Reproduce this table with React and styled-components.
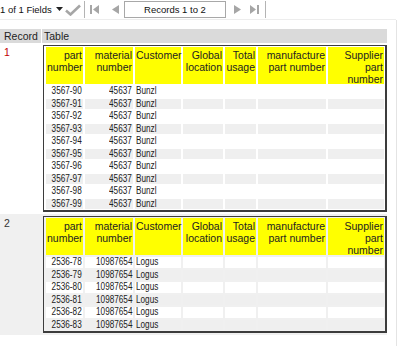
import React from "react";
import styled, { createGlobalStyle } from "styled-components";

const GlobalStyle = createGlobalStyle`
  html, body { margin: 0; padding: 0; background: #ffffff; }
  body { font-family: "Liberation Sans", Arial, sans-serif; color: #222; }
`;

const Page = styled.div`
  display: flex;
  width: 400px;
  height: 346px;
  overflow: hidden;
`;

const Main = styled.div`
  width: 396px;
  display: flex;
  flex-direction: column;
`;

const Strip = styled.div`
  flex: 1;
  border-left: 1px solid #e4e4e4;
  margin-top: 20px;
`;

const Toolbar = styled.div`
  height: 20px;
  box-sizing: border-box;
  display: flex;
  align-items: center;
  border-bottom: 1px solid #ededed;
  font-size: 9.5px;
  color: #111;
`;

const FieldLabel = styled.span`
  width: 56px;
  white-space: nowrap;
`;

const ToolIcon = styled.svg`
  display: block;
  flex: none;
  margin-left: ${(p) => p.$ml || 0}px;
`;

const Sep = styled.div`
  width: 1px;
  height: 17px;
  background: #b4b4b4;
  margin-left: ${(p) => p.$ml || 0}px;
`;

const RecordsBox = styled.div`
  margin-left: 5px;
  width: 102px;
  height: 17px;
  box-sizing: border-box;
  border: 1px solid #a8a8a8;
  display: flex;
  align-items: center;
  justify-content: center;
  font-size: 9.5px;
  color: #111;
`;

const HeaderBar = styled.div`
  margin-top: 9px;
  width: 387px;
  display: grid;
  grid-template-columns: 41px 1fr;
  column-gap: 1px;
`;

const HeaderBarCell = styled.div`
  background: #dadada;
  height: 14px;
  font-size: 10.5px;
  line-height: 14px;
  padding-left: ${(p) => p.$pl}px;
  color: #222;
`;

const RecordRow = styled.div`
  width: 387px;
  display: flex;
  padding: 2px 0;
  background: ${(p) => (p.$alt ? "#f0f0f0" : "#ffffff")};
`;

const RecordNum = styled.div`
  width: 43px;
  flex: none;
  box-sizing: border-box;
  padding: 1px 0 0 4px;
  font-size: 10.5px;
  line-height: 12px;
  color: ${(p) => (p.$current ? "#c00000" : "#333")};
`;

const Table = styled.div`
  display: grid;
  grid-template-columns: 37px 48px 46px 40px 31px 68px 56px;
  gap: 2px;
  padding: 1px 1px 1px 2px;
  border: solid #3c3c3c;
  border-width: 1px 2px 2px 1px;
`;

const HeadCell = styled.div`
  background: #ffff00;
  height: 37px;
  box-sizing: border-box;
  padding: 2px 1px 0;
  font-size: 10.5px;
  line-height: 12px;
  text-align: ${(p) => p.$align};
  color: #222;
`;

const DataCell = styled.div`
  height: 10.5px;
  padding: 0 1px;
  display: flex;
  justify-content: ${(p) => (p.$align === "right" ? "flex-end" : "flex-start")};
  overflow: hidden;
  background: ${(p) => (p.$stripe ? "#efefef" : "#ffffff")};
`;

const DataText = styled.span`
  flex: none;
  display: block;
  font-size: 10px;
  line-height: 10.5px;
  white-space: nowrap;
  color: #222;
  transform: scaleX(0.82);
  transform-origin: ${(p) => (p.$align === "right" ? "right" : "left")} center;
`;

const columns = [
  { label: "part number", align: "right" },
  { label: "material number", align: "right" },
  { label: "Customer", align: "left" },
  { label: "Global location", align: "right" },
  { label: "Total usage", align: "right" },
  { label: "manufacture part number", align: "right" },
  { label: "Supplier part number", align: "right" },
];

const records = [
  {
    n: 1,
    current: true,
    rows: ["90", "91", "92", "93", "94", "95", "96", "97", "98", "99"].map((s) => ["3567-" + s, "45637", "Bunzl"]),
  },
  {
    n: 2,
    current: false,
    rows: ["78", "79", "80", "81", "82", "83"].map((s) => ["2536-" + s, "10987654", "Logus"]),
  },
];

function Record({ rec, alt }) {
  return (
    <RecordRow $alt={alt}>
      <RecordNum $current={rec.current}>{rec.n}</RecordNum>
      <Table>
        {columns.map((c) => (
          <HeadCell key={c.label} $align={c.align}>
            {c.label}
          </HeadCell>
        ))}
        {rec.rows.map((r, i) =>
          columns.map((c, j) => (
            <DataCell key={i + "-" + j} $align={c.align} $stripe={i % 2 === 1}>
              {r[j] ? <DataText $align={c.align}>{r[j]}</DataText> : null}
            </DataCell>
          ))
        )}
      </Table>
    </RecordRow>
  );
}

export default function App() {
  const gray = "#a6a6a6";
  return (
    <>
      <GlobalStyle />
      <Page>
        <Main>
          <Toolbar>
            <FieldLabel>1 of 1 Fields</FieldLabel>
            <ToolIcon width="7" height="5" viewBox="0 0 7 5">
              <path d="M0 0 H7 L3.5 4 Z" fill="#222" />
            </ToolIcon>
            <ToolIcon $ml={2} width="16" height="12" viewBox="0 0 16 12">
              <path d="M1 6.5 L5.5 10.5 L15 1.5" stroke={gray} strokeWidth="2.6" fill="none" />
            </ToolIcon>
            <Sep $ml={3} />
            <ToolIcon $ml={5} width="9" height="9" viewBox="0 0 9 9">
              <rect x="0" y="0" width="2" height="9" fill={gray} />
              <path d="M9 0 V9 L3 4.5 Z" fill={gray} />
            </ToolIcon>
            <ToolIcon $ml={13} width="7" height="9" viewBox="0 0 7 9">
              <path d="M7 0 V9 L0 4.5 Z" fill={gray} />
            </ToolIcon>
            <RecordsBox>Records 1 to 2</RecordsBox>
            <ToolIcon $ml={8} width="7" height="9" viewBox="0 0 7 9">
              <path d="M0 0 V9 L7 4.5 Z" fill={gray} />
            </ToolIcon>
            <ToolIcon $ml={9} width="9" height="9" viewBox="0 0 9 9">
              <path d="M0 0 V9 L6 4.5 Z" fill={gray} />
              <rect x="7" y="0" width="2" height="9" fill={gray} />
            </ToolIcon>
            <Sep $ml={6} />
          </Toolbar>
          <HeaderBar>
            <HeaderBarCell $pl={4}>Record</HeaderBarCell>
            <HeaderBarCell $pl={2}>Table</HeaderBarCell>
          </HeaderBar>
          {records.map((rec, i) => (
            <Record key={rec.n} rec={rec} alt={i % 2 === 1} />
          ))}
        </Main>
        <Strip />
      </Page>
    </>
  );
}
